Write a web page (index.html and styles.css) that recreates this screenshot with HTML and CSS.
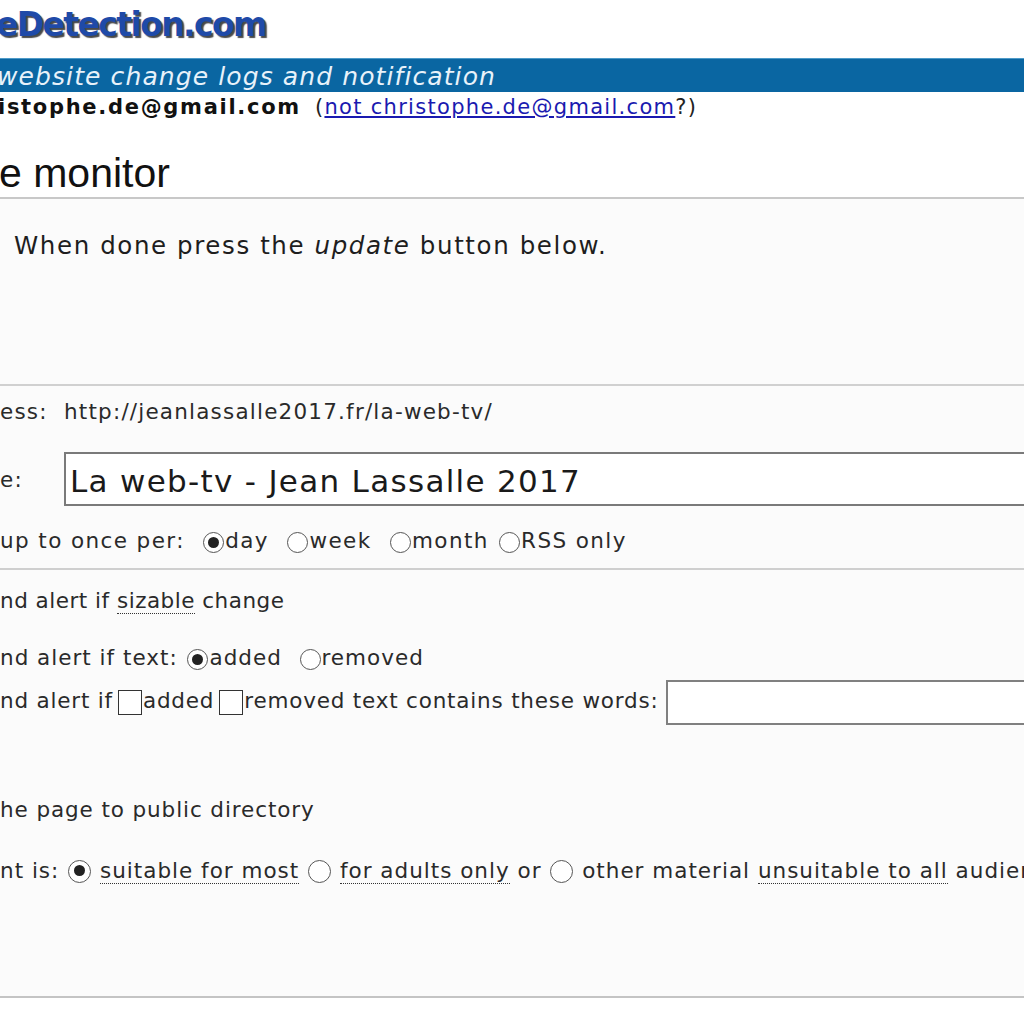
FILE: index.html
```html
<!DOCTYPE html>
<html lang="en">
<head>
    <meta charset="UTF-8">
    <title>Edit monitor</title>
    <link rel="stylesheet" href="styles.css">
</head>
<body>
    <header class="logo">eDetection.com</header>
    <div class="tagline">website change logs and notification</div>
    <div class="user">
        <b>istophe.de@gmail.com</b>
        <span class="notme">(<a href="#">not christophe.de@gmail.com</a>?)</span>
    </div>

    <h1>e monitor</h1>

    <div class="panel">
        <p class="intro">When done press the <i>update</i> button below.</p>

        <div class="group">
            <div class="row addr">
                <span class="label">ess:</span>http://jeanlassalle2017.fr/la-web-tv/
            </div>
            <div class="row title">
                <span class="label">e:</span>
                <input class="title-input" type="text" value="La web-tv - Jean Lassalle 2017">
            </div>
            <div class="row freq">up to once per:&nbsp; <span class="radio on"></span>day&nbsp; <span class="radio"></span>week&nbsp; <span class="radio"></span>month <span class="radio"></span>RSS only</div>
        </div>

        <div class="group alerts">
            <div class="row sizable">nd alert if <abbr>sizable</abbr> change</div>
            <div class="row textalert">nd alert if text: <span class="radio on"></span>added&nbsp; <span class="radio"></span>removed</div>
            <div class="row words">nd alert if<span class="check"></span>added<span class="check"></span>removed text contains these words: <input class="words-input" type="text"></div>
            <div class="row public">he page to public directory</div>
            <div class="row content">nt is: <span class="radio big on"></span> <abbr>suitable for most</abbr> <span class="radio big"></span> <abbr>for adults only</abbr> or <span class="radio big"></span> other material <abbr>unsuitable to all</abbr> audiences</div>
        </div>
    </div>
</body>
</html>
```

FILE: styles.css
```css
body {
    margin: 0;
    font-family: "DejaVu Sans", Verdana, sans-serif;
    color: #222;
    background: #fff;
    overflow: hidden;
    width: 1024px;
    height: 1024px;
}
.logo {
    font-weight: bold;
    font-size: 33px;
    letter-spacing: -1.6px;
    color: #1f4aa8;
    text-shadow: 2px 2px 1px #4a4a4a;
    height: 58px;
    line-height: 50px;
    margin-left: -4px;
    white-space: nowrap;
}
.tagline {
    background: #0a66a2;
    border-top: 1px solid #4d9ac8;
    color: #e8f2fa;
    font-style: italic;
    font-size: 25px;
    letter-spacing: 1.1px;
    height: 33px;
    line-height: 36px;
    white-space: nowrap;
    margin-left: -3px;
}
.user {
    height: 30px;
    line-height: 30px;
    white-space: nowrap;
    margin-left: -2px;
}
.user b {
    font-size: 21px;
    letter-spacing: 1.7px;
    color: #111;
    margin-right: 9px;
}
.notme {
    font-size: 21px;
    letter-spacing: 1.3px;
    color: #222;
}
.notme a {
    color: #1a1ab0;
}
h1 {
    margin: 0;
    font-family: "Liberation Sans", Arial, sans-serif;
    font-weight: normal;
    font-size: 41px;
    line-height: 1;
    color: #111;
    height: 77px;
    padding-top: 31px;
    border-bottom: 2px solid #c8c8c8;
    box-sizing: border-box;
    margin-left: -1px;
    white-space: nowrap;
}
.panel {
    background: #fbfbfb;
    border-bottom: 2px solid #c4c4c4;
    height: 799px;
    box-sizing: border-box;
}
.intro {
    margin: 0;
    padding: 27px 0 0 14px;
    font-size: 24.5px;
    letter-spacing: 1.6px;
    line-height: 40px;
    height: 187px;
    box-sizing: border-box;
    border-bottom: 2px solid #d0d0d0;
    color: #1e1e1e;
    white-space: nowrap;
}
.group {
    font-size: 21.5px;
    letter-spacing: 1.2px;
    color: #2a2a2a;
}
.row {
    white-space: nowrap;
}
.label {
    display: inline-block;
    width: 64px;
}
.addr {
    line-height: 52px;
}
.title {
    display: flex;
    align-items: center;
    height: 76px;
    padding-top: 14px;
    padding-bottom: 8px;
    box-sizing: border-box;
}
.title .label {
    flex: none;
}
.title-input {
    flex: none;
    width: 980px;
    height: 54px;
    box-sizing: border-box;
    border: 2px solid #7a7a7a;
    background: #fff;
    font-family: "DejaVu Sans", sans-serif;
    font-size: 31px;
    letter-spacing: 1.3px;
    color: #1a1a1a;
    padding: 4px 4px 0;
    margin: 0;
}
.freq {
    line-height: 54px;
    letter-spacing: 1.4px;
    border-bottom: 2px solid #cfcfcf;
}
.radio {
    display: inline-block;
    width: 21px;
    height: 21px;
    border: 1.5px solid #555;
    border-radius: 50%;
    box-sizing: border-box;
    background: #fff;
    position: relative;
    vertical-align: -5px;
    margin: 0 1px 0 2px;
}
.radio.on::after {
    content: "";
    position: absolute;
    left: 3.5px;
    top: 3.5px;
    width: 11px;
    height: 11px;
    border-radius: 50%;
    background: #222;
}
.radio.big {
    width: 23px;
    height: 23px;
    margin: 0 1px;
    vertical-align: -5px;
}
.radio.big.on::after {
    left: 4.5px;
    top: 4.5px;
    width: 11px;
    height: 11px;
}
.check {
    display: inline-block;
    width: 24px;
    height: 25px;
    border: 1.5px solid #333;
    box-sizing: border-box;
    background: #fff;
    vertical-align: -7px;
    margin: 0 1px 0 5px;
}
abbr {
    text-decoration: none;
    border-bottom: 1.5px dotted #333;
}
.sizable {
    padding-top: 3px;
    line-height: 56px;
    letter-spacing: 0.5px;
}
.textalert {
    padding-top: 8px;
    line-height: 41px;
    letter-spacing: 1px;
}
.words {
    line-height: 46px;
    letter-spacing: 0.8px;
}
.words-input {
    width: 400px;
    height: 45px;
    box-sizing: border-box;
    border: 2px solid #808080;
    background: #fff;
    margin: 0;
    vertical-align: middle;
}
.public {
    padding-top: 63px;
    line-height: 44px;
    letter-spacing: 0.9px;
}
.content {
    padding-top: 17px;
    line-height: 44px;
    letter-spacing: 1px;
}
```
